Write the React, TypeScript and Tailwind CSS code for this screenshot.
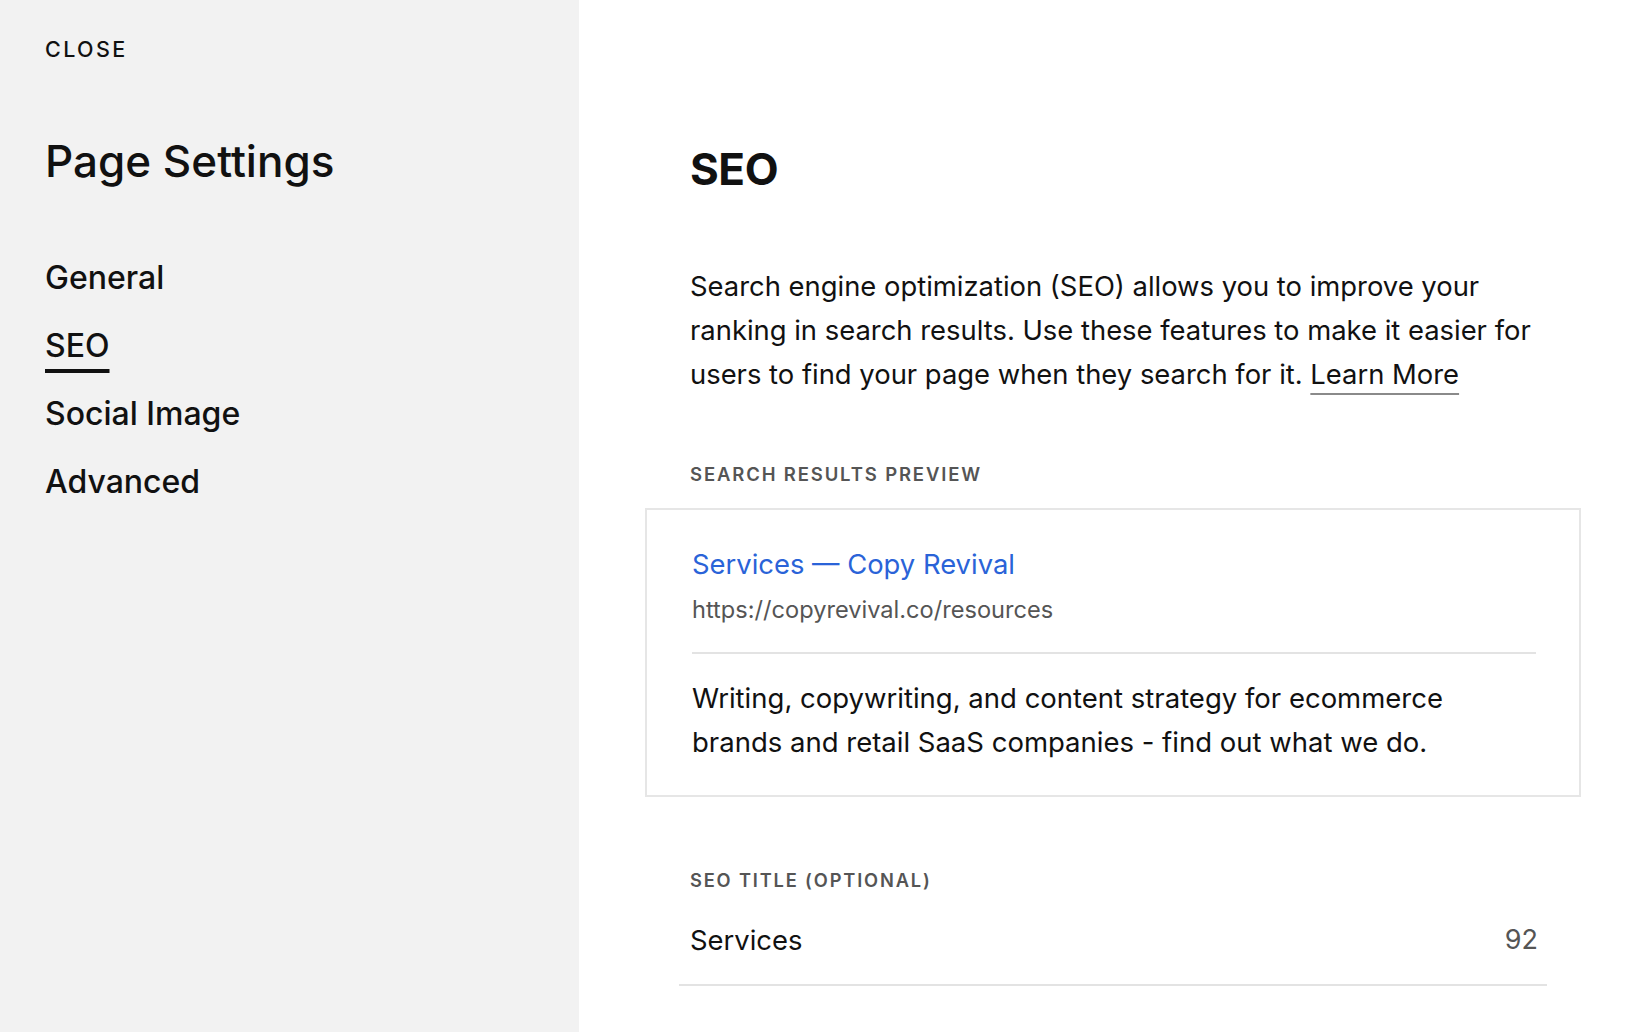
import React from "react";

const navItems = ["General", "SEO", "Social Image", "Advanced"];

function SideNav() {
  return (
    <aside className="w-[579px] shrink-0 bg-[#f2f2f2] pl-[45px] pt-[37px] text-[#111]">
      <button className="block text-[21.5px] leading-[24px] tracking-[0.11em] font-medium">CLOSE</button>
      <h1 className="mt-[74px] text-[44px] leading-[52px] font-medium">Page Settings</h1>
      <nav className="mt-[71px] flex flex-col gap-[28px]">
        {navItems.map((item) => (
          <span
            key={item}
            className={
              item === "SEO"
                ? "block w-fit text-[32px] leading-[40px] font-medium underline decoration-[4px] underline-offset-[12px] decoration-[#111]"
                : "block w-fit text-[32px] leading-[40px] font-medium"
            }
          >
            {item}
          </span>
        ))}
      </nav>
    </aside>
  );
}

function SearchPreview() {
  return (
    <div className="mt-[22px] border-2 border-[#e6e6e6] pl-[45px] pr-[43px] pt-[36px] pb-[31px]">
      <div className="text-[27.4px] leading-[36px] text-[#2a63d8]">Services — Copy Revival</div>
      <div className="mt-[13px] text-[23.6px] leading-[30px] text-[#555]">https://copyrevival.co/resources</div>
      <div className="mt-[27px] h-[2px] bg-[#e3e3e3]" />
      <p className="mt-[22px] max-w-[790px] text-[27.5px] leading-[44px] text-[#111]">
        Writing, copywriting, and content strategy for ecommerce brands and retail SaaS companies - find out what we do.
      </p>
    </div>
  );
}

export default function App() {
  return (
    <div
      className="flex h-[1032px] w-full overflow-hidden bg-white"
      style={{ fontFamily: "Inter, 'Liberation Sans', sans-serif" }}
    >
      <SideNav />
      <main className="flex-1 pl-[66px] pr-[45px] pt-[143px] text-[#111]">
        <h2 className="px-[45px] text-[44px] leading-[52px] font-bold tracking-[-0.01em]">SEO</h2>
        <p className="mt-[69px] pl-[45px] pr-[20px] text-[27.4px] leading-[44px]">
          Search engine optimization (SEO) allows you to improve your ranking in search results. Use these features
          to make it easier for users to find your page when they search for it.{" "}
          <a className="underline decoration-2 decoration-[#8a8a8a] underline-offset-[9px]">Learn More</a>
        </p>
        <div className="mt-[66px] px-[45px] text-[18.5px] leading-[24px] font-semibold tracking-[0.1em] text-[#555]">
          SEARCH RESULTS PREVIEW
        </div>
        <SearchPreview />
        <div className="mt-[71px] px-[45px] text-[18.3px] leading-[24px] font-semibold tracking-[0.1em] text-[#555]">
          SEO TITLE (OPTIONAL)
        </div>
        <div className="mx-[34px] mt-[30px] flex items-center justify-between border-b-2 border-[#e3e3e3] pl-[11px] pr-[9px] pb-[26px]">
          <span className="text-[27.4px] leading-[36px]">Services</span>
          <span className="text-[27px] leading-[36px] text-[#555]">92</span>
        </div>
      </main>
    </div>
  );
}
